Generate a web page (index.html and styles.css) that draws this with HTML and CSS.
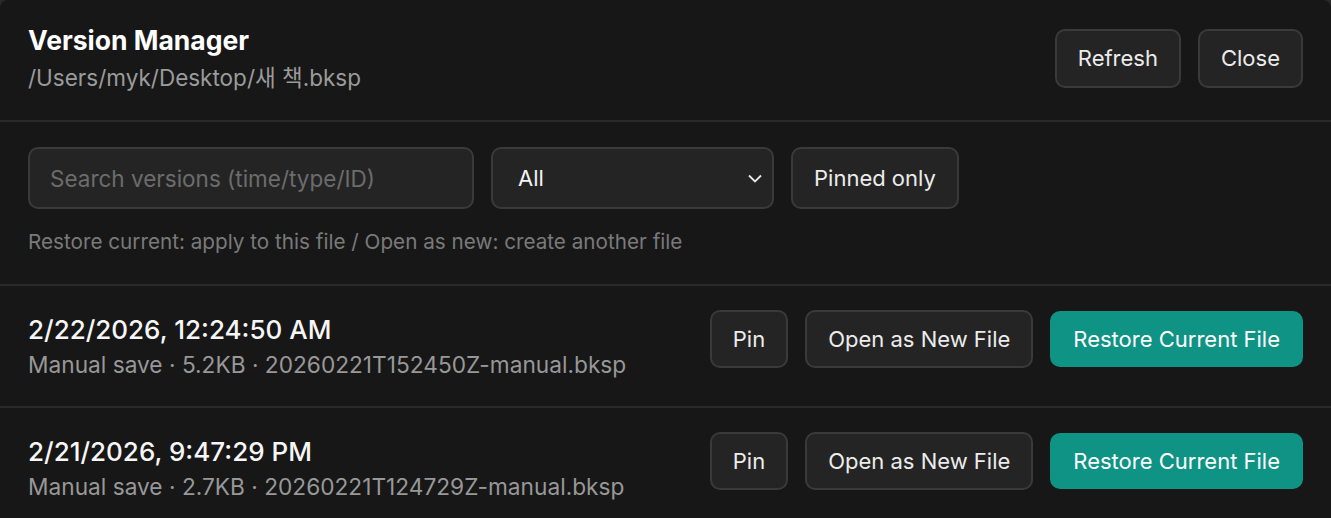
FILE: index.html
```html
<!DOCTYPE html>
<html lang="en">
<head>
    <meta charset="UTF-8">
    <title>Version Manager</title>
    <link rel="stylesheet" href="styles.css">
</head>
<body>
    <div class="dialog">
        <div class="header">
            <div class="header-text">
                <h1 class="title">Version Manager</h1>
                <div class="path">/Users/myk/Desktop/새 책.bksp</div>
            </div>
            <div class="header-actions">
                <button class="btn">Refresh</button>
                <button class="btn">Close</button>
            </div>
        </div>

        <div class="filters">
            <div class="filter-row">
                <input class="search" type="text" placeholder="Search versions (time/type/ID)">
                <div class="select">
                    <span>All</span>
                    <svg width="14" height="9" viewBox="0 0 14 9"><path d="M1 1.5 L7 7.5 L13 1.5" fill="none" stroke="#e8e8e8" stroke-width="1.8"/></svg>
                </div>
                <button class="btn btn-filter">Pinned only</button>
            </div>
            <div class="hint">Restore current: apply to this file / Open as new: create another file</div>
        </div>

        <div class="version">
            <div class="version-info">
                <div class="version-date">2/22/2026, 12:24:50 AM</div>
                <div class="version-meta">Manual save · 5.2KB · 20260221T152450Z-manual.bksp</div>
            </div>
            <div class="version-actions">
                <button class="btn btn-row">Pin</button>
                <button class="btn btn-row">Open as New File</button>
                <button class="btn btn-row btn-primary">Restore Current File</button>
            </div>
        </div>

        <div class="version">
            <div class="version-info">
                <div class="version-date">2/21/2026, 9:47:29 PM</div>
                <div class="version-meta">Manual save · 2.7KB · 20260221T124729Z-manual.bksp</div>
            </div>
            <div class="version-actions">
                <button class="btn btn-row">Pin</button>
                <button class="btn btn-row">Open as New File</button>
                <button class="btn btn-row btn-primary">Restore Current File</button>
            </div>
        </div>
    </div>
</body>
</html>
```

FILE: styles.css
```css
body, html {
    margin: 0;
    height: 100%;
    background: #2a2a2a;
    font-family: Inter, "Noto Sans CJK KR", sans-serif;
    overflow: hidden;
}

.dialog {
    height: 100%;
    background: #171717;
    border-radius: 8px 8px 0 0;
    color: #f2f2f2;
}

.header {
    display: flex;
    justify-content: space-between;
    align-items: center;
    padding: 24px 28px 28px;
    border-bottom: 2px solid #2a2a2a;
}

.title {
    margin: 0;
    font-size: 26.5px;
    line-height: 32px;
    font-weight: 700;
    color: #ffffff;
}

.path {
    margin-top: 8px;
    font-size: 22.5px;
    line-height: 28px;
    color: #9b9b9b;
}

.header-actions {
    display: flex;
    gap: 17px;
}

.btn {
    height: 59px;
    padding: 0 21px;
    border: 2px solid #3a3a3a;
    border-radius: 10px;
    background: #242424;
    color: #ececec;
    font-family: inherit;
    font-size: 22px;
    cursor: pointer;
}

.filters {
    padding: 25px 28px 29px;
    border-bottom: 2px solid #2a2a2a;
}

.filter-row {
    display: flex;
    gap: 17px;
}

.search {
    width: 446px;
    height: 62px;
    box-sizing: border-box;
    padding: 0 20px;
    border: 2px solid #3a3a3a;
    border-radius: 10px;
    background: #242424;
    color: #ececec;
    font-family: inherit;
    font-size: 22.5px;
    outline: none;
}

.search::placeholder {
    color: #6c6c6c;
}

.select {
    width: 283px;
    height: 62px;
    box-sizing: border-box;
    display: flex;
    justify-content: space-between;
    align-items: center;
    padding: 0 10px 0 25px;
    border: 2px solid #3a3a3a;
    border-radius: 10px;
    background: #242424;
    font-size: 22px;
    color: #f4f4f4;
}

.btn-filter {
    height: 62px;
}

.hint {
    margin-top: 20px;
    font-size: 20.7px;
    line-height: 26px;
    color: #7a7a7a;
}

.version {
    display: flex;
    justify-content: space-between;
    align-items: flex-start;
    padding: 24px 28px 24px;
    height: 72px;
    border-bottom: 2px solid #2a2a2a;
}

.version-info {
    padding-top: 4px;
}

.version-date {
    font-size: 26px;
    line-height: 32px;
    font-weight: 500;
    color: #f6f6f6;
}

.version-meta {
    margin-top: 5px;
    font-size: 22.7px;
    line-height: 28px;
    color: #989898;
}

.version-actions {
    display: flex;
    align-items: center;
    gap: 17px;
}

.btn-row {
    height: 58px;
}

.btn-primary {
    height: 56px;
    border-color: #0e9384;
    background: #0e9384;
    color: #ffffff;
}
```
